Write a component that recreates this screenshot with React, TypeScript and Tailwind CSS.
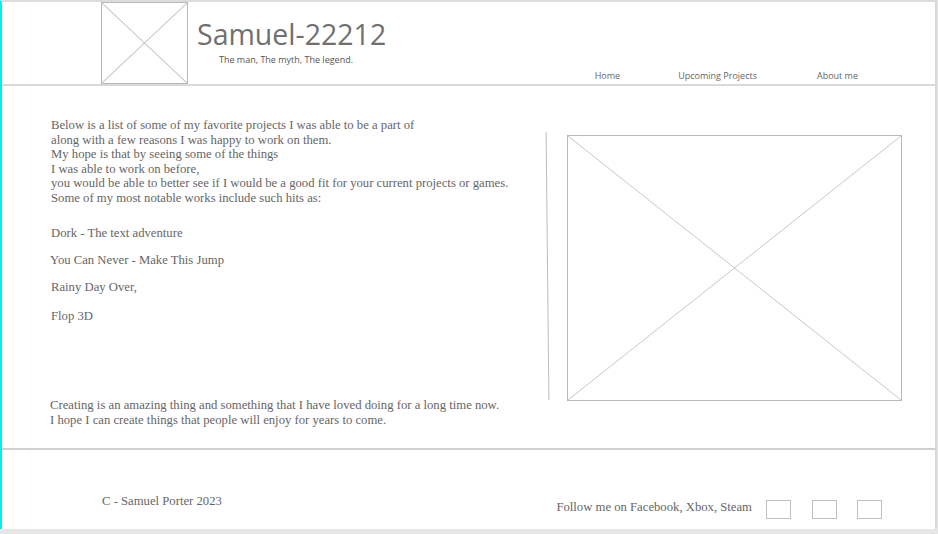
import React from "react";

function Placeholder({ className }: { className: string }) {
  return (
    <div className={`relative border border-[#b8b8b8] bg-white ${className}`}>
      <svg className="absolute inset-0 h-full w-full" preserveAspectRatio="none" viewBox="0 0 100 100">
        <line x1="0" y1="0" x2="100" y2="100" stroke="#c8c8c8" strokeWidth="1" vectorEffect="non-scaling-stroke" />
        <line x1="100" y1="0" x2="0" y2="100" stroke="#c8c8c8" strokeWidth="1" vectorEffect="non-scaling-stroke" />
      </svg>
    </div>
  );
}

export default function App() {
  const serif = { fontFamily: '"Liberation Serif", "Times New Roman", serif' };
  const sans = { fontFamily: '"Open Sans", "Noto Sans", sans-serif' };

  return (
    <div className="h-[534px] w-[938px] overflow-hidden bg-[#e6e6e6]">
      <div className="flex h-[529px] w-[937px] flex-col border-t-2 border-r-2 border-l-2 border-t-[#dcdcdc] border-r-[#d8d8d8] border-l-[#00f0f0] bg-white">
        {/* Header */}
        <header className="flex h-[84px] shrink-0 border-b-2 border-[#d9d9d9]" style={sans}>
          <Placeholder className="ml-[99px] h-full w-[87px]" />
          <div className="ml-[9px] pt-[14px]">
            <h1 className="text-[28.5px] leading-[36px] text-[#707070]">Samuel-22212</h1>
            <p className="ml-[22px] mt-[1px] text-[9px] text-[#555]">The man, The myth, The legend.</p>
          </div>
          <nav className="ml-auto flex items-end pb-[2px] pr-[77px] text-[9px] text-[#666]">
            <span>Home</span>
            <span className="ml-[58px]">Upcoming Projects</span>
            <span className="ml-[60px]">About me</span>
          </nav>
        </header>

        {/* Main */}
        <main className="flex h-[364px] shrink-0 border-b-2 border-[#d0d0d0]" style={serif}>
          <section className="flex w-[545px] flex-col pl-[49px] pt-[32px] text-[12.7px] leading-[14.5px] text-[#666]">
            <p>
              Below is a list of some of my favorite projects I was able to be a part of
              <br />
              along with a few reasons I was happy to work on them.
              <br />
              My hope is that by seeing some of the things
              <br />
              I was able to work on before,
              <br />
              you would be able to better see if I would be a good fit for your current projects or games.
              <br />
              Some of my most notable works include such hits as:
            </p>
            <ul className="mt-[21px] flex flex-col gap-[12.5px]">
              <li>Dork - The text adventure</li>
              <li className="-ml-[1px]">You Can Never - Make This Jump</li>
              <li>Rainy Day Over,</li>
              <li className="mt-[2px]">Flop 3D</li>
            </ul>
            <p className="-ml-[1px] mt-auto mb-[21px]">
              Creating is an amazing thing and something that I have loved doing for a long time now.
              <br />
              I hope I can create things that people will enjoy for years to come.
            </p>
          </section>
          <div className="mt-[46px] h-[268px] w-[1px] skew-x-[0.6deg] bg-[#bdbdbd]" />
          <Placeholder className="ml-[19px] mt-[49px] h-[266px] w-[335px]" />
        </main>

        {/* Footer */}
        <footer className="flex flex-1 text-[12.7px] text-[#666]" style={serif}>
          <p className="pl-[100px] pt-[42px]">C - Samuel Porter 2023</p>
          <div className="ml-auto flex items-start pr-[53px] pt-[50px]">
            <span className="-mt-[2px]">Follow me on Facebook, Xbox, Steam</span>
            <span className="ml-[14px] h-[19px] w-[25px] border border-[#c0c0c0]" />
            <span className="ml-[21px] h-[19px] w-[25px] border border-[#c0c0c0]" />
            <span className="ml-[20px] h-[19px] w-[25px] border border-[#c0c0c0]" />
          </div>
        </footer>
      </div>
    </div>
  );
}
